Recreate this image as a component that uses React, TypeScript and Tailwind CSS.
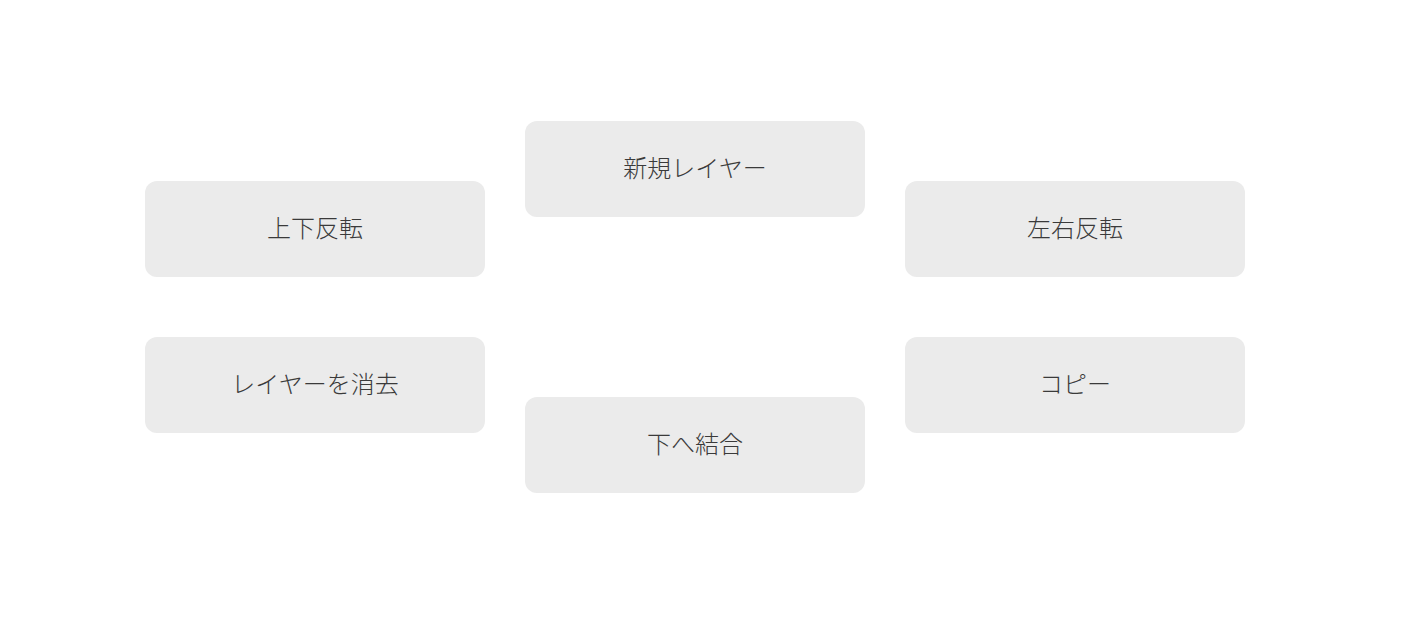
const left = ['上下反転', 'レイヤーを消去'];
const right = ['左右反転', 'コピー'];

function ActionButton({ label }: { label: string }) {
  return (
    <button className="w-[340px] h-[96px] pb-1 rounded-xl bg-[#ebebeb] text-[#3a3a3a] text-2xl font-light flex items-center justify-center">
      {label}
    </button>
  );
}

export default function App() {
  return (
    <div
      className="w-[1410px] h-[636px] bg-white pt-[121px] pl-[145px]"
      style={{ fontFamily: '"Noto Sans CJK JP", "Noto Sans", sans-serif' }}
    >
      <div className="flex items-center gap-10">
        <div className="flex flex-col gap-[60px]">
          {left.map((l) => (
            <ActionButton key={l} label={l} />
          ))}
        </div>
        <div className="flex flex-col gap-[180px]">
          <ActionButton label="新規レイヤー" />
          <ActionButton label="下へ結合" />
        </div>
        <div className="flex flex-col gap-[60px]">
          {right.map((l) => (
            <ActionButton key={l} label={l} />
          ))}
        </div>
      </div>
    </div>
  );
}
